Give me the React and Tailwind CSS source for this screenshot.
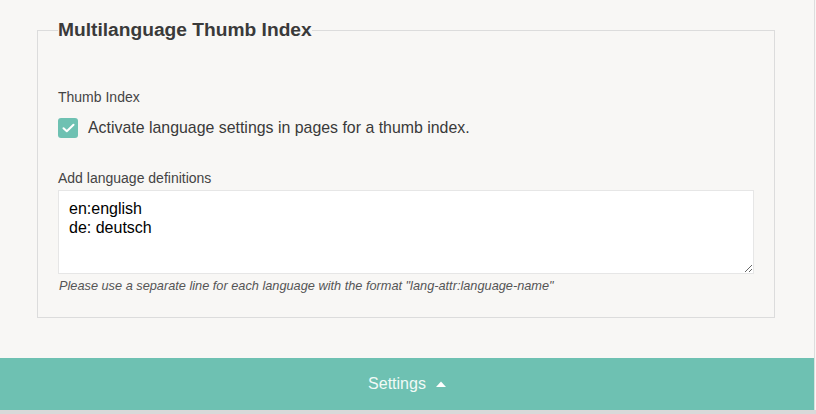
import React from "react";

export default function App() {
  return (
    <div
      className="w-[816px] h-[414px] bg-[#f8f7f5] flex flex-col overflow-hidden"
      style={{ fontFamily: '"Liberation Sans", Arial, sans-serif' }}
    >
      <div className="flex flex-1 min-h-0">
        <div className="w-[815px] border-r border-[#dddddd] flex flex-col">
          <div className="px-[37px] pt-[19px] h-[358px] shrink-0">
            <fieldset className="w-[738px] border border-[#dcdcdc] px-[20px] pb-[24px]">
              <legend className="text-[19.2px] leading-[22px] font-bold text-[#3a3a3a] px-0">
                Multilanguage Thumb Index
              </legend>
              <div className="pt-[48px] text-[14px] leading-[16px] text-[#444]">Thumb Index</div>
              <label className="mt-[13px] flex items-center gap-[10px]">
                <span className="w-[20px] h-[20px] rounded-[3px] bg-[#6ec1b2] flex items-center justify-center">
                  <svg width="13" height="10" viewBox="0 0 13 10" fill="none">
                    <path d="M1.5 5.2 L4.8 8.3 L11.5 1.7" stroke="#fff" strokeWidth="2" strokeLinecap="round" strokeLinejoin="round" />
                  </svg>
                </span>
                <span className="text-[15.9px] leading-[18px] text-[#3a3a3a]">
                  Activate language settings in pages for a thumb index.
                </span>
              </label>
              <div className="mt-[32px] text-[14px] leading-[16px] text-[#444]">Add language definitions</div>
              <textarea
                className="mt-[4px] block w-[696px] h-[84px] bg-white border border-[#e6e6e6] pl-[10px] pt-[8px] text-[16px] leading-[19px] text-black outline-none"
                style={{ fontFamily: '"Liberation Sans", Arial, sans-serif' }}
                defaultValue={"en:english\nde: deutsch"}
              />
              <div className="mt-[5px] ml-[1px] text-[12.75px] leading-[14px] italic text-[#555]">
                Please use a separate line for each language with the format "lang-attr:language-name"
              </div>
            </fieldset>
          </div>
          <div className="h-[52px] bg-[#6ec1b2] flex items-center justify-center gap-[10px] text-[#f1faf7]">
            <span className="text-[16px] leading-[18px]">Settings</span>
            <svg width="10" height="6" viewBox="0 0 10 6">
              <path d="M0 6 L5 0.5 L10 6 Z" fill="#ffffff" />
            </svg>
          </div>
        </div>
      </div>
      <div className="h-[4px] bg-[#d9d9d9] shrink-0" />
    </div>
  );
}
